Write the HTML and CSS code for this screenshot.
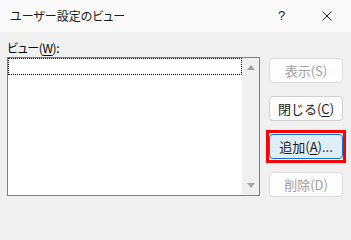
FILE: index.html
```html
<!DOCTYPE html>
<html lang="ja">
<head>
<meta charset="utf-8">
<link rel="stylesheet" href="styles.css">
</head>
<body>
<div class="dialog">
  <div class="titlebar">
    <span class="title">ユーザー設定のビュー</span>
    <span class="help">?</span>
    <span class="close">
      <svg width="10" height="10" viewBox="0 0 10 10"><path d="M0.5 0.5 L9.5 9.5 M9.5 0.5 L0.5 9.5" stroke="#1a1a1a" stroke-width="1" fill="none"/></svg>
    </span>
  </div>
  <div class="content">
    <div class="left">
      <div class="label">ビュー(<u>W</u>):</div>
      <div class="listbox">
        <div class="items">
          <div class="item focus"></div>
        </div>
        <div class="scrollbar">
          <span class="arrow up"></span>
          <span class="arrow down"></span>
        </div>
      </div>
    </div>
    <div class="buttons">
      <div class="btn disabled">表示(S)</div>
      <div class="btn">閉じる(<u>C</u>)</div>
      <div class="btn default highlight">追加(<u>A</u>)...</div>
      <div class="btn disabled">削除(D)</div>
    </div>
  </div>
</div>
</body>
</html>
```
FILE: styles.css
```css
html, body {
  margin: 0;
  padding: 0;
}
body {
  width: 351px;
  height: 206px;
  overflow: hidden;
  background: #f0f0f0;
  font-family: "Noto Sans CJK JP", "Noto Sans", sans-serif;
  font-size: 12px;
  font-feature-settings: "palt";
  color: #000;
}
.dialog {
  width: 351px;
  height: 206px;
  display: flex;
  flex-direction: column;
}
.titlebar {
  height: 32px;
  background: #f9f9f9;
  display: flex;
  align-items: center;
  padding-left: 10px;
  box-sizing: border-box;
}
.title {
  flex: 1;
  font-size: 12px;
  line-height: 16px;
  color: #1a1a1a;
}
.help {
  width: 6px;
  margin-right: 38px;
  font-family: "Liberation Sans", sans-serif;
  font-size: 13px;
  line-height: 16px;
  color: #1a1a1a;
}
.close {
  width: 10px;
  height: 10px;
  margin-right: 19px;
  display: flex;
}
.content {
  display: flex;
  padding: 8px 0 0 7px;
}
.left {
  display: flex;
  flex-direction: column;
}
.label {
  line-height: 16px;
  height: 16px;
  margin-bottom: 1px;
  letter-spacing: -0.4px;
}
.label u, .btn u {
  text-decoration-thickness: 1px;
  text-underline-offset: 2px;
}
.listbox {
  width: 253px;
  height: 139px;
  box-sizing: border-box;
  border: 1px solid #7a7e85;
  background: #fff;
  display: flex;
}
.items {
  flex: 1;
}
.item {
  height: 17px;
  box-sizing: border-box;
}
.item.focus {
  border: 1px dotted #000;
}
.scrollbar {
  width: 17px;
  background: #f0f0f0;
  display: flex;
  flex-direction: column;
  justify-content: space-between;
  align-items: center;
  padding: 7px 0 7px;
  box-sizing: border-box;
}
.arrow {
  width: 0;
  height: 0;
  border-left: 4px solid transparent;
  border-right: 4px solid transparent;
}
.arrow.up {
  border-bottom: 5px solid #a3a3a3;
}
.arrow.down {
  border-top: 5px solid #a3a3a3;
}
.buttons {
  margin-left: 9px;
  padding-top: 18px;
  display: flex;
  flex-direction: column;
  gap: 13px;
}
.btn {
  position: relative;
  width: 74px;
  height: 25px;
  box-sizing: border-box;
  border: 1px solid #d0d0d0;
  border-radius: 4px;
  background: #fdfdfd;
  display: flex;
  align-items: center;
  justify-content: center;
  font-size: 13px;
  font-feature-settings: normal;
  line-height: 16px;
  color: #1a1a1a;
}
.btn.disabled {
  color: #a0a0a0;
  border-color: #dcdcdc;
}
.btn.default {
  background: #e0eef9;
  border-color: #0078d4;
}
.btn.highlight::after {
  content: "";
  position: absolute;
  left: -5px;
  top: -6px;
  right: -5px;
  bottom: -6px;
  border: 3px solid #ff0000;
  pointer-events: none;
}
.btn.highlight::after {
  left: -4px;
  right: -4px;
  top: -5px;
  bottom: -5px;
}
```
